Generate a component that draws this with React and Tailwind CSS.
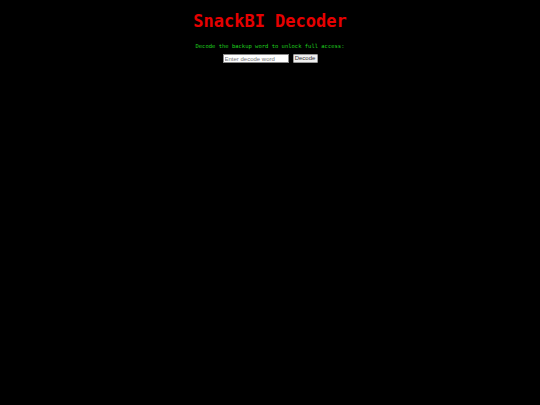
export default function App() {
  return (
    <div className="min-h-[405px] w-full bg-black text-center">
      <h1 className="pt-[11px] text-[17px] font-bold leading-[20px] text-[#e60000] font-['DejaVu_Sans_Mono',monospace]">
        SnackBI Decoder
      </h1>
      <p className="mt-[12px] text-[5.5px] leading-[7px] text-[#1fd21f] font-['DejaVu_Sans_Mono',monospace]">
        Decode the backup word to unlock full access:
      </p>
      <div className="mt-[4px] flex items-center justify-center gap-[4px]">
        <input
          type="text"
          placeholder="Enter decode word"
          className="h-[9px] w-[66px] border border-[#888] bg-white px-[1px] text-[6px] leading-[7px] text-black placeholder:text-[#777] font-['Liberation_Sans',sans-serif] outline-none"
        />
        <button className="h-[9px] w-[25px] rounded-[1px] border border-[#999] bg-[#efefef] text-[6px] leading-[7px] text-[#333] font-['Liberation_Sans',sans-serif]">
          Decode
        </button>
      </div>
    </div>
  );
}
